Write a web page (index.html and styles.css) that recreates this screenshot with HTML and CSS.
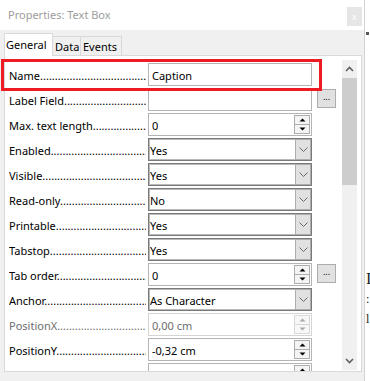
FILE: index.html
```html
<!DOCTYPE html>
<html lang="en">
<head>
    <meta charset="UTF-8">
    <title>Properties: Text Box</title>
    <link rel="stylesheet" href="styles.css">
</head>
<body>
    <div class="desk">
        <div class="dialog">
            <div class="titlebar">
                <span class="title">Properties: Text Box</span>
                <span class="close">x</span>
            </div>
            <div class="tabs">
                <span class="tab tab-general active">General</span>
                <span class="tab tab-data">Data</span>
                <span class="tab tab-events">Events</span>
            </div>
            <div class="panel">
                <div class="rows">
                    <div class="row">
                        <span class="label">Name</span>
                        <div class="field"><span class="value">Caption</span></div>
                    </div>
                    <div class="row">
                        <span class="label">Label Field</span>
                        <div class="field"><span class="value"></span></div>
                        <button class="more">...</button>
                    </div>
                    <div class="row">
                        <span class="label">Max. text length</span>
                        <div class="field spin"><span class="value">0</span>
                            <div class="spin-btns">
                                <span class="spin-up"><svg width="7" height="4" viewBox="0 0 7 4"><polygon points="0.5,3.5 3.5,0.5 6.5,3.5"/></svg></span>
                                <span class="spin-down"><svg width="7" height="4" viewBox="0 0 7 4"><polygon points="0.5,0.5 6.5,0.5 3.5,3.5"/></svg></span>
                            </div>
                        </div>
                    </div>
                    <div class="row">
                        <span class="label">Enabled</span>
                        <div class="field dropdown"><span class="value">Yes</span>
                            <span class="dd-btn"><svg width="9" height="5" viewBox="0 0 9 5"><polyline points="0.5,0.5 4.5,4.5 8.5,0.5"/></svg></span>
                        </div>
                    </div>
                    <div class="row">
                        <span class="label">Visible</span>
                        <div class="field dropdown"><span class="value">Yes</span>
                            <span class="dd-btn"><svg width="9" height="5" viewBox="0 0 9 5"><polyline points="0.5,0.5 4.5,4.5 8.5,0.5"/></svg></span>
                        </div>
                    </div>
                    <div class="row">
                        <span class="label">Read-only</span>
                        <div class="field dropdown"><span class="value">No</span>
                            <span class="dd-btn"><svg width="9" height="5" viewBox="0 0 9 5"><polyline points="0.5,0.5 4.5,4.5 8.5,0.5"/></svg></span>
                        </div>
                    </div>
                    <div class="row">
                        <span class="label">Printable</span>
                        <div class="field dropdown"><span class="value">Yes</span>
                            <span class="dd-btn"><svg width="9" height="5" viewBox="0 0 9 5"><polyline points="0.5,0.5 4.5,4.5 8.5,0.5"/></svg></span>
                        </div>
                    </div>
                    <div class="row">
                        <span class="label">Tabstop</span>
                        <div class="field dropdown"><span class="value">Yes</span>
                            <span class="dd-btn"><svg width="9" height="5" viewBox="0 0 9 5"><polyline points="0.5,0.5 4.5,4.5 8.5,0.5"/></svg></span>
                        </div>
                    </div>
                    <div class="row">
                        <span class="label">Tab order</span>
                        <div class="field spin"><span class="value">0</span>
                            <div class="spin-btns">
                                <span class="spin-up"><svg width="7" height="4" viewBox="0 0 7 4"><polygon points="0.5,3.5 3.5,0.5 6.5,3.5"/></svg></span>
                                <span class="spin-down"><svg width="7" height="4" viewBox="0 0 7 4"><polygon points="0.5,0.5 6.5,0.5 3.5,3.5"/></svg></span>
                            </div>
                        </div>
                        <button class="more">...</button>
                    </div>
                    <div class="row">
                        <span class="label">Anchor</span>
                        <div class="field dropdown"><span class="value">As Character</span>
                            <span class="dd-btn"><svg width="9" height="5" viewBox="0 0 9 5"><polyline points="0.5,0.5 4.5,4.5 8.5,0.5"/></svg></span>
                        </div>
                    </div>
                    <div class="row disabled">
                        <span class="label">PositionX</span>
                        <div class="field spin"><span class="value">0,00 cm</span>
                            <div class="spin-btns">
                                <span class="spin-up"><svg width="7" height="4" viewBox="0 0 7 4"><polygon points="0.5,3.5 3.5,0.5 6.5,3.5"/></svg></span>
                                <span class="spin-down"><svg width="7" height="4" viewBox="0 0 7 4"><polygon points="0.5,0.5 6.5,0.5 3.5,3.5"/></svg></span>
                            </div>
                        </div>
                    </div>
                    <div class="row">
                        <span class="label">PositionY</span>
                        <div class="field spin"><span class="value">-0,32 cm</span>
                            <div class="spin-btns">
                                <span class="spin-up"><svg width="7" height="4" viewBox="0 0 7 4"><polygon points="0.5,3.5 3.5,0.5 6.5,3.5"/></svg></span>
                                <span class="spin-down"><svg width="7" height="4" viewBox="0 0 7 4"><polygon points="0.5,0.5 6.5,0.5 3.5,3.5"/></svg></span>
                            </div>
                        </div>
                    </div>
                    <div class="row">
                        <span class="label"></span>
                        <div class="field spin"><span class="value">0,51 cm</span>
                            <div class="spin-btns">
                                <span class="spin-up"><svg width="7" height="4" viewBox="0 0 7 4"><polygon points="0.5,3.5 3.5,0.5 6.5,3.5"/></svg></span>
                                <span class="spin-down"><svg width="7" height="4" viewBox="0 0 7 4"><polygon points="0.5,0.5 6.5,0.5 3.5,3.5"/></svg></span>
                            </div>
                        </div>
                    </div>
                </div>
                <div class="scrollbar">
                    <span class="sb-arrow"><svg width="9" height="6" viewBox="0 0 9 6"><polyline points="1,5 4.5,1.5 8,5"/></svg></span>
                    <span class="sb-thumb"></span>
                    <span class="sb-track"></span>
                    <span class="sb-arrow"><svg width="9" height="6" viewBox="0 0 9 6"><polyline points="1,1 4.5,4.5 8,1"/></svg></span>
                </div>
            </div>
            <div class="highlight"></div>
        </div>
        <div class="behind">
            <div class="behind-bar"></div>
            <div class="behind-text big">I</div>
            <div class="behind-text">:</div>
            <div class="behind-text">l</div>
        </div>
    </div>
</body>
</html>
```

FILE: styles.css
```css
* {
    box-sizing: border-box;
}
body {
    margin: 0;
    font-family: "Noto Sans", sans-serif;
    font-size: 11px;
    color: #000;
    background: #fff;
}
.desk {
    display: flex;
    width: 370px;
    height: 381px;
    overflow: hidden;
}
.dialog {
    position: relative;
    width: 365px;
    height: 381px;
    flex-shrink: 0;
    background: #f0f0f0;
    border-right: 1px solid #d4d4d4;
    display: flex;
    flex-direction: column;
}
.titlebar {
    height: 30px;
    background: #fff;
    display: flex;
    justify-content: space-between;
    align-items: flex-start;
}
.title {
    margin: 7px 0 0 8px;
    color: #9d9d9d;
    font-size: 11px;
    line-height: 16px;
}
.close {
    margin: 7px 2px 0 0;
    width: 15px;
    height: 19px;
    background: #e6e6e6;
    color: #fff;
    font-size: 9px;
    line-height: 19px;
    text-align: center;
}
.tabs {
    height: 25px;
    display: flex;
    align-items: flex-end;
    padding-left: 4px;
}
.tab {
    height: 19px;
    line-height: 19px;
    background: #f0f0f0;
    border: 1px solid #d9d9d9;
    border-bottom: none;
    border-left: none;
    padding-left: 2px;
    white-space: nowrap;
}
.tab-general {
    width: 49px;
    padding-left: 1px;
}
.tab-data {
    width: 28px;
}
.tab-events {
    width: 41px;
}
.tab.active {
    height: 23px;
    line-height: 21px;
    background: #fff;
    border-left: 1px solid #d9d9d9;
    margin-bottom: -1px;
    position: relative;
    z-index: 1;
}
.panel {
    margin-left: 4px;
    width: 358px;
    height: 317px;
    background: #fff;
    border: 1px solid #d9d9d9;
    display: flex;
    overflow: hidden;
}
.rows {
    flex: 1;
    padding: 7px 0 0 4px;
    overflow: hidden;
}
.row {
    display: flex;
    height: 23px;
    margin-bottom: 2px;
}
.label {
    width: 137px;
    margin-right: 2px;
    height: 23px;
    line-height: 25px;
    white-space: nowrap;
    overflow: hidden;
}
.label::after {
    content: "..........................................................................";
}
.field {
    width: 164px;
    height: 23px;
    border: 1px solid #b4b4b4;
    display: flex;
    align-items: center;
    padding-left: 3px;
    flex-shrink: 0;
}
.value {
    flex: 1;
    line-height: 23px;
    padding-top: 2px;
    white-space: nowrap;
    overflow: hidden;
}
.dropdown {
    border-color: #7a7a7a;
    box-shadow: inset 0 0 0 1px #b9b9b9;
    padding-left: 1px;
}
.dd-btn {
    width: 16px;
    height: 21px;
    background: #e1e1e1;
    border: 1px solid #adadad;
    display: flex;
    align-items: center;
    justify-content: center;
}
.dd-btn svg {
    fill: none;
    stroke: #6a6a6a;
    stroke-width: 1;
}
.spin-btns {
    width: 16px;
    height: 19px;
    margin-right: 1px;
    display: flex;
    flex-direction: column;
}
.spin-up, .spin-down {
    height: 10px;
    background: #f4f4f4;
    border: 1px solid #adadad;
    display: flex;
    align-items: center;
    justify-content: center;
}
.spin-down {
    margin-top: -1px;
}
.spin-btns svg {
    fill: #000;
}
.more {
    width: 19px;
    height: 19px;
    margin: 1px 0 0 5px;
    padding: 0 0 4px;
    background: #e1e1e1;
    border: 1px solid #adadad;
    font-family: "Noto Sans", sans-serif;
    font-size: 9px;
    line-height: 12px;
    color: #000;
}
.disabled .label, .disabled .value {
    color: #6d6d6d;
}
.disabled .field {
    border-color: #d5d5d5;
}
.disabled .spin-up, .disabled .spin-down {
    border-color: #d9d9d9;
    background: #f7f7f7;
}
.disabled .spin-btns svg {
    fill: #a8a8a8;
}
.scrollbar {
    width: 15px;
    margin: 4px 4px 1px 0;
    background: #f0f0f0;
    display: flex;
    flex-direction: column;
}
.sb-arrow {
    height: 18px;
    display: flex;
    align-items: center;
    justify-content: center;
}
.sb-arrow svg {
    fill: none;
    stroke: #606060;
    stroke-width: 1.6;
}
.sb-thumb {
    height: 107px;
    background: #cdcdcd;
}
.sb-track {
    flex: 1;
}
.highlight {
    position: absolute;
    left: 1px;
    top: 59px;
    width: 321px;
    height: 32px;
    border: 3px solid #ed1c24;
}
.behind {
    flex: 1;
    background: #fff;
    padding-left: 1px;
}
.behind-bar {
    margin-top: 32px;
    width: 3px;
    height: 3px;
    background: #555;
}
.behind-text {
    font-family: "Liberation Serif", serif;
    font-size: 12px;
    line-height: 20px;
    color: #222;
}
.behind-text.big {
    margin-top: 234px;
    font-size: 16px;
}
```
